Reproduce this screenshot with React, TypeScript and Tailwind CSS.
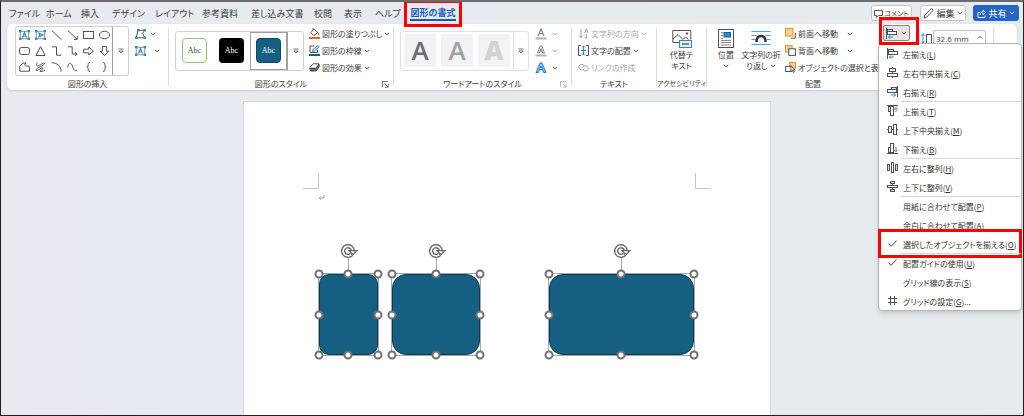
import { useState } from 'react'
import type { ReactNode } from 'react'

const tabs = [
  { name: 'ファイル', width: 'w-[37px]' },
  { name: 'ホーム', width: 'w-[35px]' },
  { name: '挿入', width: 'w-[31px]' },
  { name: 'デザイン', width: 'w-[43px]' },
  { name: 'レイアウト', width: 'w-[47px]' },
  { name: '参考資料', width: 'w-[49px]' },
  { name: '差し込み文書', width: 'w-[63px]' },
  { name: '校閲', width: 'w-[30px]' },
  { name: '表示', width: 'w-[31px]' },
  { name: 'ヘルプ', width: 'w-[35px]' },
  { name: '図形の書式', width: 'w-[46px]' },
]

function Svg({ w, h, children }: { w: number; h: number; children: ReactNode }) {
  return (
    <svg
      width={w}
      height={h}
      viewBox={`0 0 ${w} ${h}`}
      fill="none"
      stroke="#505050"
      strokeWidth="1"
      className="shrink-0"
      aria-hidden="true"
    >
      {children}
    </svg>
  )
}

function Chevron({ color = '#444' }: { color?: string }) {
  return (
    <Svg w={6} h={4}>
      <path d="M1 .8l2 2 2-2" stroke={color} />
    </Svg>
  )
}

function MoreButton({ label, className }: { label: string; className: string }) {
  return (
    <button aria-label={label} className={`flex shrink-0 items-center justify-center ${className}`}>
      <Svg w={6} h={6}>
        <path d="M.5 1h5M1 3h4l-2 2z" strokeWidth=".8" />
      </Svg>
    </button>
  )
}

function Corners({ w = 11, h = 10 }: { w?: number; h?: number }) {
  return (
    <g fill="#2b88d8" stroke="none">
      <rect x="0" y="0" width="2.4" height="2.4" />
      <rect x={w - 2.4} y="0" width="2.4" height="2.4" />
      <rect x="0" y={h - 2.4} width="2.4" height="2.4" />
      <rect x={w - 2.4} y={h - 2.4} width="2.4" height="2.4" />
    </g>
  )
}

const shapeIcons: { name: string; art: ReactNode }[] = [
  {
    name: 'テキスト ボックス',
    art: (
      <>
        <rect x="1.2" y="1.2" width="8.6" height="7.6" stroke="#777" strokeWidth=".8" />
        <path d="M3.4 7.6L5.5 2.4l2.1 5.2M4.2 6h2.6" stroke="#2b88d8" strokeWidth="1.2" />
        <Corners />
      </>
    ),
  },
  {
    name: '縦書きテキスト ボックス',
    art: (
      <>
        <rect x="1.2" y="1.2" width="8.6" height="7.6" stroke="#777" strokeWidth=".8" />
        <path d="M3 2.8L8.2 5 3 7.2M4.6 3.6v2.8" stroke="#2b88d8" strokeWidth="1.2" />
        <Corners />
      </>
    ),
  },
  { name: '直線', art: <path d="M.8.5l9.5 9" /> },
  { name: '矢印', art: <path d="M.8.5l9.2 8.7M10.3 6.2v3.2H7" /> },
  { name: '四角形', art: <rect x=".5" y="1.5" width="10" height="7" /> },
  { name: '楕円', art: <ellipse cx="5.5" cy="5" rx="5" ry="3.8" /> },
  { name: '角丸四角形', art: <rect x=".5" y="1.5" width="10" height="7" rx="2" /> },
  { name: '三角形', art: <path d="M5.5.7l4.6 8.8H.9z" /> },
  { name: 'コネクタ', art: <path d="M1 .8h4.5v8.4h4.8" /> },
  { name: '矢印コネクタ', art: <path d="M1 .8h4.2v7.2h4.6M8 6l2.2 2L8 9.8" /> },
  { name: '右矢印', art: <path d="M.6 3.2h5.2V1L10.4 5 5.8 9V6.8H.6z" /> },
  { name: '下矢印', art: <path d="M3.4.5v4.8H1.2l4.3 4.3 4.3-4.3H7.6V.5z" /> },
  {
    name: 'フリーフォーム',
    art: <path d="M.8 9.2V4.5L4 1h3L5.6 3c1.6 1.6 2.4.8 4.2 1l.7 2v3.2z" />,
  },
  {
    name: 'フリーハンド',
    art: <path d="M2.6.5C.4 2.8 1.6 4.6 3.4 3.8 5.6 2.8 9 0 9.6 1.4 10 3.4 1 5.6 1 8c.2 2.4 5.6-3.4 7-2 .8 1.2-3.6 2.4-3 3.4.8.8 3.6-.4 5.2-1.4" />,
  },
  { name: '円弧', art: <path d="M.8.8c5 0 9.2 3 9.4 8.8" /> },
  { name: '曲線', art: <path d="M.5 5.5C2-.5 4.2.5 5.3 4s2.8 6 4.9 4.2" /> },
  { name: '左中かっこ', art: <path d="M7 .5C3.4.5 6.6 5 3.8 5 6.6 5 3.4 9.5 7 9.5" /> },
  { name: '右中かっこ', art: <path d="M4 .5C7.6.5 4.4 5 7.2 5 4.4 5 7.6 9.5 4 9.5" /> },
]

const shapeStyles = [
  { name: '枠線のみ - 緑', swatch: 'border border-[#8cc870] bg-white text-[#444]', selected: false },
  { name: '塗りつぶし - 黒', swatch: 'bg-black text-white', selected: false },
  { name: '塗りつぶし - 青緑', swatch: 'border border-[#0f4a66] bg-[#156082] text-white', selected: true },
]

const wordArtStyles = ['text-[#6e6e6e]', 'text-[#a0a0a0]', 'text-[#d2d2d2]']

function Group({
  label,
  className,
  launcher = false,
  dim = false,
  children,
}: {
  label: string
  className: string
  launcher?: boolean
  dim?: boolean
  children: ReactNode
}) {
  return (
    <section aria-label={label} className={`flex shrink-0 flex-col ${className}`}>
      <div className="flex h-[53px] items-center">{children}</div>
      <div className="relative flex h-3 items-center justify-center whitespace-nowrap">
        {label}
        {launcher && (
          <button aria-label={`${label}の詳細`} className="absolute right-1 top-1">
            <Svg w={7} h={7}>
              <path d="M.5 6V.5H6M2.5 2.5l3.5 3.5M6.2 3v3.2H3" stroke={dim ? '#aaa' : '#555'} strokeWidth=".8" />
            </Svg>
          </button>
        )}
      </div>
    </section>
  )
}

function Divider() {
  return <div className="my-1 w-px shrink-0 bg-[#dcdcdc]" />
}

function Tool({
  icon,
  label,
  menu = true,
  disabled = false,
}: {
  icon: ReactNode
  label: string
  menu?: boolean
  disabled?: boolean
}) {
  return (
    <button
      disabled={disabled}
      className={`flex h-[17px] items-center gap-[2px] whitespace-nowrap ${disabled ? 'text-[#a6a6a6]' : ''}`}
    >
      {icon}
      {label}
      {menu && (
        <span className="ml-auto">
          <Chevron color={disabled ? '#aaa' : '#444'} />
        </span>
      )}
    </button>
  )
}

function LetterTool({ label, disabled = false, children }: { label: string; disabled?: boolean; children: ReactNode }) {
  return (
    <button aria-label={label} disabled={disabled} className="flex h-[17px] items-center gap-[5px]">
      <Svg w={12} h={12}>{children}</Svg>
      <Chevron color={disabled ? '#aaa' : '#444'} />
    </button>
  )
}

function AlignLeftIcon() {
  return (
    <Svg w={11} h={11}>
      <path d="M.5 0v11" />
      <rect x="1.5" y="1.5" width="5" height="2" fill="#ddd" />
      <rect x="1.5" y="3.5" width="9" height="3" fill="#fff" />
      <path d="M7 9H2.5M4.2 7.2L2.4 9l1.8 1.8" stroke="#2b88d8" />
    </Svg>
  )
}

const check = (
  <Svg w={11} h={11}>
    <path d="M1.5 5.6l2.6 2.7L9.6 2.6" stroke="#444" />
  </Svg>
)

const menuItems: { text: string; accel: string; tail?: string; icon?: ReactNode; line?: boolean; marked?: boolean }[] = [
  { text: '左揃え', accel: 'L', icon: <AlignLeftIcon /> },
  {
    text: '左右中央揃え',
    accel: 'C',
    icon: (
      <Svg w={11} h={11}>
        <path d="M5.5 0v11" />
        <rect x="2.5" y="1.5" width="6" height="3" fill="#eee" />
        <rect x=".5" y="6.5" width="10" height="3" fill="#fff" />
      </Svg>
    ),
  },
  {
    text: '右揃え',
    accel: 'R',
    icon: (
      <Svg w={11} h={11}>
        <path d="M10.5 0v11" />
        <rect x="4.5" y="1.5" width="5" height="2" fill="#ddd" />
        <rect x=".5" y="3.5" width="9" height="3" fill="#fff" />
        <path d="M4 9h4.5M6.8 7.2L8.6 9l-1.8 1.8" stroke="#2b88d8" />
      </Svg>
    ),
  },
  {
    text: '上揃え',
    accel: 'T',
    line: true,
    icon: (
      <Svg w={11} h={11}>
        <path d="M0 .5h11" />
        <rect x="1.5" y="1.5" width="2" height="5" fill="#ddd" />
        <rect x="3.5" y="1.5" width="3" height="9" fill="#fff" />
        <path d="M9 7V2.6M7.3 4.4L9 2.6l1.8 1.8" stroke="#2b88d8" />
      </Svg>
    ),
  },
  {
    text: '上下中央揃え',
    accel: 'M',
    icon: (
      <Svg w={11} h={11}>
        <path d="M0 5.5h11" />
        <rect x="1.5" y="2.5" width="3" height="6" fill="#eee" />
        <rect x="6.5" y=".5" width="3" height="10" fill="#fff" />
      </Svg>
    ),
  },
  {
    text: '下揃え',
    accel: 'B',
    icon: (
      <Svg w={11} h={11}>
        <path d="M0 10.5h11" />
        <rect x="1.5" y="4.5" width="2" height="5" fill="#ddd" />
        <rect x="3.5" y=".5" width="3" height="9" fill="#fff" />
        <path d="M9 4v4.6M7.3 6.8L9 8.6l1.8-1.8" stroke="#2b88d8" />
      </Svg>
    ),
  },
  {
    text: '左右に整列',
    accel: 'H',
    line: true,
    icon: (
      <Svg w={11} h={11}>
        <rect x=".5" y="2.5" width="2" height="6" fill="#ddd" />
        <rect x="4.5" y=".5" width="2" height="10" fill="#fff" />
        <rect x="8.5" y="2.5" width="2" height="6" fill="#ddd" />
      </Svg>
    ),
  },
  {
    text: '上下に整列',
    accel: 'V',
    icon: (
      <Svg w={11} h={11}>
        <rect x="3.5" y=".5" width="4" height="2" fill="#ddd" />
        <path d="M5.500 2.500v6" />
        <rect x=".5" y="4.5" width="10" height="2" fill="#fff" />
        <rect x="3.5" y="8.5" width="4" height="2" fill="#ddd" />
      </Svg>
    ),
  },
  { text: '用紙に合わせて配置', accel: 'P', line: true },
  { text: '余白に合わせて配置', accel: 'A' },
  { text: '選択したオブジェクトを揃える', accel: 'O', icon: check, marked: true },
  { text: '配置ガイドの使用', accel: 'U', icon: check, line: true },
  { text: 'グリッド線の表示', accel: 'S' },
  {
    text: 'グリッドの設定',
    accel: 'G',
    tail: '...',
    icon: (
      <Svg w={11} h={11}>
        <path d="M3.5 1v9M7.5 1v9M1 3.5h9M1 7.5h9" />
      </Svg>
    ),
  },
]

function AlignMenu() {
  return (
    <ul
      role="menu"
      className="absolute right-px top-[41px] z-10 w-[144px] rounded-sm border border-[#b5b5b5] bg-white shadow-md"
    >
      {menuItems.map((item) => (
        <li key={item.accel} role="none" className="relative flex">
          <button role="menuitem" className="flex h-[19px] w-full items-center text-left text-[#333]">
            <span className="flex w-[22px] shrink-0 justify-center pl-1">{item.icon}</span>
            <span
              className={`flex h-full flex-1 items-center whitespace-nowrap border-t pl-[2px] ${
                item.line ? 'border-[#d8d8d8]' : 'border-transparent'
              }`}
            >
              {item.text}(<u>{item.accel}</u>){item.tail}
            </span>
          </button>
          {item.marked && (
            <span className="pointer-events-none absolute -inset-x-px -inset-y-[5px] border-[3px] border-[#ff0000]" />
          )}
        </li>
      ))}
    </ul>
  )
}

const handles = [
  'left-0 top-0',
  'left-1/2 top-0',
  'left-full top-0',
  'left-0 top-1/2',
  'left-full top-1/2',
  'left-0 top-full',
  'left-1/2 top-full',
  'left-full top-full',
]

function SelectedShape({ className, radius }: { className: string; radius: string }) {
  return (
    <div className={`absolute top-[171px] h-[83px] border border-[#a8a8a8] ${className}`}>
      <div className={`h-full border border-[#0c3a50] bg-[#156082] ${radius}`} />
      <div className="absolute -top-4 left-1/2 h-4 w-px bg-[#a8a8a8]" />
      <div className="absolute -top-[31px] left-1/2 -translate-x-2">
        <Svg w={20} h={16}>
          <path d="M11.6 11.200A4.800 4.800 0 1 1 12.800 8" stroke="#686868" strokeWidth="4.400" />
          <path d="M11.200 11.600A4.800 4.800 0 1 1 12.800 8" stroke="#fff" strokeWidth="1.600" />
          <path d="M9.200 7.700h7.600l-3.800 3.900z" fill="#fff" stroke="#686868" strokeWidth="1.300" />
        </Svg>
      </div>
      {handles.map((pos) => (
        <span
          key={pos}
          className={`absolute size-[9px] -translate-x-1/2 -translate-y-1/2 rounded-full border-2 border-[#707070] bg-white ${pos}`}
        />
      ))}
    </div>
  )
}

export default function App() {
  const [activeTab, setActiveTab] = useState('図形の書式')
  const [height, setHeight] = useState('32.6 mm')

  return (
    <div
      lang="ja"
      className="relative flex h-screen flex-col overflow-hidden border border-t-2 border-[#222] border-t-[#6b6b6b] bg-linear-to-r from-[#e8eaf0] to-[#e5ebef] font-['Noto_Sans_CJK_JP',sans-serif] text-[8px] leading-[11px] text-[#3b3b3b] [font-feature-settings:'palt']"
    >
      <header className="flex h-[22px] shrink-0 items-center pl-2 pr-1">
        <nav className="flex flex-1 text-[9px]">
          {tabs.map((tab) => (
            <button
              key={tab.name}
              onClick={() => setActiveTab(tab.name)}
              className={`relative shrink-0 whitespace-nowrap text-left ${tab.width}`}
            >
              {activeTab === tab.name ? (
                <>
                  <span className="block border-b-2 border-[#185abd] py-px text-center font-bold text-[#185abd]">
                    {tab.name}
                  </span>
                  <span className="pointer-events-none absolute -inset-x-[6px] -inset-y-[6px] border-[3px] border-[#ff0000]" />
                </>
              ) : (
                tab.name
              )}
            </button>
          ))}
        </nav>
        <div className="flex shrink-0 gap-2">
          <button className="flex h-4 w-[41px] items-center justify-center gap-px whitespace-nowrap rounded-[3px] border border-[#c4c4c4] bg-white text-[7px]">
            <Svg w={9} h={9}>
              <path d="M.5 1.500h8v5H4.500L2.500 8.300V6.500h-2z" />
            </Svg>
            コメント
          </button>
          <button className="flex h-4 w-[46px] items-center justify-center gap-[2px] whitespace-nowrap rounded-[3px] border border-[#c4c4c4] bg-white text-[9px]">
            <Svg w={11} h={11}>
              <path d="M1 10l.8-3L8 .9c1-.8 2.600.8 1.800 1.800L3.800 9z" />
            </Svg>
            編集
            <Chevron />
          </button>
          <button className="-ml-px flex h-4 w-[46px] items-center justify-center gap-[2px] whitespace-nowrap rounded-[3px] bg-[#2563c4] text-[9px] text-white">
            <Svg w={9} h={9}>
              <path d="M3 3.500H1v5h7V6.500M3.200 6C3.300 3.500 4.500 2.800 6 2.800V1l2.500 2.500L6 5.800V4.200" stroke="#fff" strokeWidth=".9" />
            </Svg>
            共有
            <Chevron color="#fff" />
          </button>
        </div>
      </header>

      <div className="mx-[6px] flex h-[66px] shrink-0 rounded-[5px] bg-white shadow-sm">
        <Group label="図形の挿入" className="w-[161px]">
          <div className="ml-2 flex h-[50px] rounded-[3px] border border-[#d0d0d0]">
            <div className="grid grid-cols-6">
              {shapeIcons.map((shape) => (
                <button key={shape.name} aria-label={shape.name} className="flex h-4 w-4 items-center justify-center">
                  <Svg w={11} h={10}>{shape.art}</Svg>
                </button>
              ))}
            </div>
            <MoreButton label="図形" className="w-4 rounded-r-[3px] border-l border-[#a0a0a0]" />
          </div>
          <div className="ml-[6px] flex h-[51px] flex-col">
            <button aria-label="図形の編集" className="flex h-[17px] items-center gap-1">
              <Svg w={11} h={10}>
                <path d="M3 1.200h7L7.500 4l2.300 4.800H1.200z" />
                <g fill="#2b88d8" stroke="none">
                  <rect x="2" width="2.4" height="2.4" />
                  <rect x="8.6" width="2.4" height="2.4" />
                  <rect y="7.6" width="2.4" height="2.4" />
                  <rect x="8.6" y="7.6" width="2.4" height="2.4" />
                </g>
              </Svg>
              <Chevron />
            </button>
            <button aria-label="テキスト ボックスの描画" className="flex h-[17px] items-center gap-2">
              <Svg w={11} h={10}>{shapeIcons[0].art}</Svg>
              <Chevron />
            </button>
          </div>
        </Group>
        <Divider />

        <Group label="図形のスタイル" className="w-[224px]" launcher>
          <div className="ml-[6px] flex h-10 rounded-[3px] border border-[#d0d0d0]">
            {shapeStyles.map((style) => (
              <button
                key={style.name}
                aria-label={style.name}
                className={`flex w-[37px] items-center justify-center border ${
                  style.selected ? 'border-[#a0a0a0]' : 'border-transparent'
                }`}
              >
                <span
                  className={`flex size-[25px] items-center justify-center rounded-[4px] font-['Liberation_Serif',serif] text-[8px] ${style.swatch}`}
                >
                  Abc
                </span>
              </button>
            ))}
            <MoreButton label="図形のスタイル一覧" className="w-4 rounded-r-[3px] border-l border-[#a0a0a0]" />
          </div>
          <div className="ml-[5px] flex h-[51px] flex-col items-start">
            <Tool
              label="図形の塗りつぶし"
              icon={
                <Svg w={11} h={11}>
                  <path d="M5.200 1l3.600 3.400L5 7.600 1.800 4.600zM4 2V0M9 5c1.200 1.200 1 2.200.2 2.200" />
                  <path d="M0 10h11" stroke="#e8641b" strokeWidth="2" />
                </Svg>
              }
            />
            <Tool
              label="図形の枠線"
              icon={
                <Svg w={11} h={11}>
                  <path d="M5.500 1H1v6.500h7.500V5" />
                  <path d="M3.500 6.500l.5-2L8.800.5l1.400 1.400-4.700 4z" fill="#cfe6f8" stroke="#2b88d8" />
                  <path d="M0 10h11" stroke="#156082" strokeWidth="2" />
                </Svg>
              }
            />
            <Tool
              label="図形の効果"
              icon={
                <Svg w={11} h={11}>
                  <path d="M1 7V5.200L4 1.800h6L7 6.200H1.500" />
                  <path d="M1 6.500h6l3.200-4V5L7 9H1.500z" fill="#666" />
                </Svg>
              }
            />
          </div>
        </Group>
        <Divider />

        <Group label="ワードアートのスタイル" className="w-[177px]" launcher dim>
          <div className="ml-[6px] flex h-10 rounded-[3px] border border-[#e0e0e0]">
            <div className="flex items-center gap-[5px] px-[3px]">
              {wordArtStyles.map((color, i) => (
                <button
                  key={color}
                  aria-label={`ワードアート ${i + 1}`}
                  disabled
                  className={`flex h-[33px] w-8 items-center justify-center bg-[#f3f3f5] font-['Open_Sans',sans-serif] text-[26px] ${
                    i === 2 ? 'font-extrabold' : 'font-semibold'
                  } ${color}`}
                >
                  A
                </button>
              ))}
            </div>
            <MoreButton label="ワードアート一覧" className="w-[15px] border-l border-[#e0e0e0]" />
          </div>
          <div className="ml-[6px] flex h-[51px] flex-col">
            <LetterTool label="文字の塗りつぶし" disabled>
              <path d="M3 8L6 1l3 7M4.200 5.600h3.600" stroke="#888" strokeWidth="1.200" />
              <path d="M.5 10.500h11" stroke="#b0b0b0" strokeWidth="2" />
            </LetterTool>
            <LetterTool label="文字の輪郭" disabled>
              <path d="M2.500 8L5.200 1h1.600l2.700 7H7.800L6 3.500 4.200 8zM4.500 6h3" stroke="#888" />
              <path d="M.5 10.500h11" stroke="#b0b0b0" strokeWidth="2" />
            </LetterTool>
            <LetterTool label="文字の効果">
              <path d="M1 10.500L5 1h2l4 9.500H8.600L6 4 3.400 10.500zM4 7.600h4" stroke="#1f7bd0" fill="#8cc4f0" />
            </LetterTool>
          </div>
        </Group>
        <Divider />

        <Group label="テキスト" className="w-[84px]">
          <div className="ml-[6px] flex h-[51px] flex-col items-start">
            <Tool
              label="文字列の方向"
              disabled
              icon={
                <Svg w={11} h={11}>
                  <path d="M3 1v8.500M1 7.500l2 2 2-2M6.500 5L8.200.8 10 5M8.200 6v4.500M7 9.300l1.200 1.200 1.300-1.200" stroke="#999" />
                </Svg>
              }
            />
            <Tool
              label="文字の配置"
              icon={
                <Svg w={11} h={11}>
                  <path d="M3 .5H.5v10H3M8 .5h2.500v10H8" />
                  <path d="M5.500 1v9M3 5.500h5M4 2.500L5.500 1 7 2.500M4 8.500L5.500 10 7 8.500" stroke="#2b88d8" />
                </Svg>
              }
            />
            <Tool
              label="リンクの作成"
              menu={false}
              disabled
              icon={
                <Svg w={11} h={11}>
                  <path d="M6.500 6.500C4.500 9 .8 7.500.8 5S4 1.500 5.800 3.200M4.500 5.500C5.500 2.800 10.200 3.500 10.200 6.500S6.500 9.500 5.500 8.200" stroke="#999" />
                </Svg>
              }
            />
          </div>
        </Group>
        <Divider />

        <Group label="アクセシビリティ" className="w-[49px] text-[7px]">
          <button className="flex w-full flex-col items-center self-start whitespace-nowrap pt-[5px] text-[8px]">
            <Svg w={20} h={20}>
              <path d="M7 13.500H.8V1.500h18v9M1 10l5-4.500 5 5 2.500-2.500 3 2.500" />
              <circle cx="15" cy="4.500" r=".8" fill="#505050" />
              <rect x="7.500" y="11.500" width="12" height="7" fill="#e4f1fb" stroke="#2b88d8" />
              <path d="M10 15h7" stroke="#888" strokeWidth="2" />
            </Svg>
            <span>代替テ</span>
            <span>キスト</span>
          </button>
        </Group>
        <Divider />

        <Group label="配置" className="w-[212px]">
          <button className="ml-[10px] flex w-[18px] flex-col items-center self-start whitespace-nowrap pt-[5px]">
            <Svg w={16} h={20}>
              <rect x=".5" y=".5" width="15" height="18" fill="#fafafa" />
              <rect x="6" y="3.500" width="6.500" height="4.500" fill="#2b88d8" stroke="#1b6098" />
              <path d="M3 3.500h2M3 6.500h2M3 9.500h2M3 11.500h10M3 13.500h10M3 16h10" stroke="#888" />
            </Svg>
            <span>位置</span>
            <span className="flex h-[11px] items-center">
              <Chevron />
            </span>
          </button>
          <button className="ml-[6px] flex w-10 flex-col items-center self-start whitespace-nowrap pt-[5px]">
            <Svg w={20} h={20}>
              <path d="M.5 2.500h19M.5 6.500h5M14.500 6.500h5M.5 10.500h4M15.500 10.500h4M.5 15.500h19" stroke="#4a9fe0" />
              <path d="M5.500 13c0-3.500 1.500-6 4.500-6s4.500 2.500 4.500 6" stroke="#333" strokeWidth="2.500" />
            </Svg>
            <span>文字列の折</span>
            <span className="flex items-center gap-[2px]">
              り返し
              <Chevron />
            </span>
          </button>
          <div className="ml-1 flex h-[51px] w-[68px] flex-col">
            <Tool
              label="前面へ移動"
              icon={
                <Svg w={11} h={11}>
                  <path d="M6 10.200h4.300V5" />
                  <rect x=".6" y=".6" width="7.400" height="7.400" fill="#fbd38a" stroke="#e8912d" />
                </Svg>
              }
            />
            <Tool
              label="背面へ移動"
              icon={
                <Svg w={11} h={11}>
                  <rect x=".6" y=".6" width="6.500" height="6.500" fill="#fbd38a" stroke="#e8912d" />
                  <rect x="3.800" y="3.800" width="6.600" height="6.600" fill="#fff" />
                </Svg>
              }
            />
            <Tool
              label="オブジェクトの選択と表示"
              menu={false}
              icon={
                <Svg w={11} h={11}>
                  <rect x="4.500" y=".6" width="6" height="5.500" fill="#fbd38a" stroke="#e8912d" />
                  <rect x=".6" y="4.500" width="6" height="5" fill="#fff" />
                  <path d="M5.800 3.500v6.300l1.600-1.500 1.100 2.200.9-.5-1.100-2.100h2z" fill="#fff" />
                </Svg>
              }
            />
          </div>
          <div className="relative ml-[30px] self-start pt-px">
            <button
              aria-label="オブジェクトの配置"
              aria-haspopup="menu"
              aria-expanded="true"
              className="flex h-4 w-[27px] items-center justify-center gap-1 rounded-[2px] border border-[#8a8a8a] bg-[#e6e6e6]"
            >
              <AlignLeftIcon />
              <Chevron />
            </button>
            <span className="pointer-events-none absolute -bottom-1 -left-1 -right-[9px] -top-[7px] z-20 border-[3px] border-[#ff0000]" />
          </div>
        </Group>
        <Divider />

        <Group label="サイズ" className="w-[73px]">
          <label className="flex items-center gap-px self-start pl-px pt-[6px]">
            <Svg w={11} h={11}>
              <path d="M2 .8v9.400M.5 2.500L2 .8l1.500 1.700M.5 8.500L2 10.200l1.500-1.700" stroke="#2b88d8" />
              <path d="M5.500 10.500V1.500h5v9" />
            </Svg>
            <span className="flex h-4 w-[53px] items-center justify-between rounded-[2px] border border-[#bdbdbd] pl-[2px] pr-[2px]">
              <input
                aria-label="図形の高さ"
                value={height}
                onChange={(e) => setHeight(e.target.value)}
                className="h-3 w-10 min-w-0 font-['Open_Sans',sans-serif] outline-none"
              />
              <Svg w={6} h={6}>
                <path d="M1 3.500l2-2 2 2" />
              </Svg>
            </span>
          </label>
        </Group>
        <Divider />
      </div>

      <AlignMenu />

      <main className="flex flex-1 justify-center pr-[11px] pt-[11px]">
        <div className="relative w-[528px] border border-b-0 border-[#d6d9dd] bg-white">
          <div className="absolute left-[59px] top-[71px] size-4 border-b border-r border-[#c4c4c4]" />
          <div className="absolute right-[59px] top-[71px] size-4 border-b border-l border-[#c4c4c4]" />
          <span className="absolute left-[74px] top-[92px]">
            <Svg w={7} h={7}>
              <path d="M6 1v3H1.500M3 2.200L1.200 4 3 5.800" stroke="#909090" strokeWidth=".8" />
            </Svg>
          </span>
          <SelectedShape className="left-[74px] w-[61px]" radius="rounded-[10px]" />
          <SelectedShape className="left-[147px] w-[90px]" radius="rounded-[14px]" />
          <SelectedShape className="left-[304px] w-[147px]" radius="rounded-[14px]" />
        </div>
      </main>
    </div>
  )
}
